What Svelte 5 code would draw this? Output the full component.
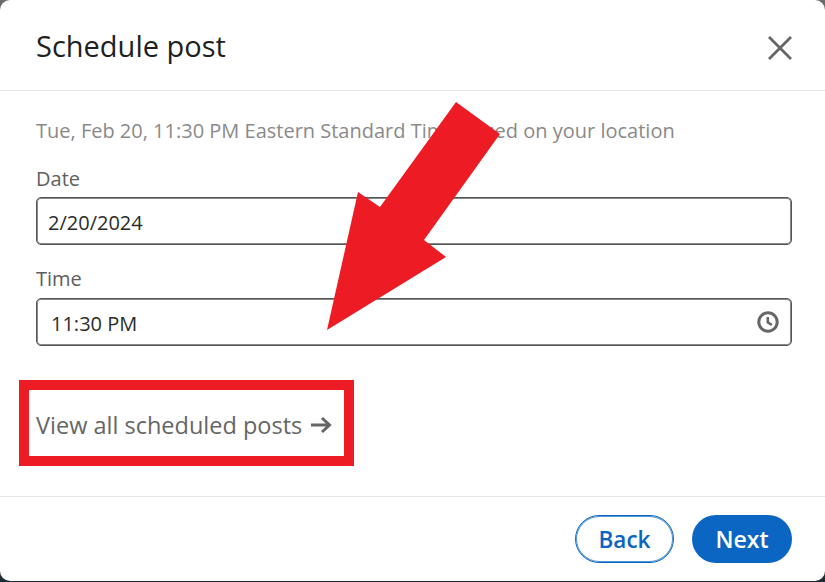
<script>
  const arrow = "456,102 500,134 424,240 446,257 327,330 358,192 380,207";
</script>

<div class="dialog">
  <header class="head">
    <h2>Schedule post</h2>
    <button class="close" aria-label="Close">
      <svg width="26" height="26" viewBox="0 0 26 26"><path d="M2 2 L24 24 M24 2 L2 24" stroke="#666" stroke-width="2.8" fill="none"/></svg>
    </button>
  </header>
  <section class="body">
    <p class="info">Tue, Feb 20, 11:30 PM Eastern Standard Time based on your location</p>
    <label class="field date">
      <span>Date</span>
      <div class="input">2/20/2024</div>
    </label>
    <label class="field time">
      <span>Time</span>
      <div class="input timeinput">
        <span class="val">11:30 PM</span>
        <svg width="22" height="22" viewBox="0 0 22 22"><circle cx="11" cy="11" r="9.2" stroke="#666" stroke-width="3" fill="none"/><path d="M10.8 6 V11.2 L14.8 14" stroke="#666" stroke-width="2.6" fill="none"/></svg>
      </div>
    </label>
    <a class="link" href="#top">View all scheduled posts
      <svg width="22" height="18" viewBox="0 0 22 18"><path d="M1 9 H19 M12 2 L19.5 9 L12 16" stroke="#666" stroke-width="3" fill="none"/></svg>
    </a>
  </section>
  <footer class="foot">
    <button class="btn back">Back</button>
    <button class="btn next">Next</button>
  </footer>
  <div class="redbox"></div>
  <svg class="arrow" width="825" height="582" viewBox="0 0 825 582"><polygon points={arrow} fill="#ed1c24"/></svg>
</div>

<style>
  :global(body) {
    margin: 0;
    height: 582px;
    background: linear-gradient(#6b6b6b, #555 60%, #1c2b33);
  }
  .dialog {
    position: relative;
    width: 825px;
    height: 581px;
    background: #fff;
    border-radius: 10px;
    font-family: "Open Sans", "Noto Sans", sans-serif;
    display: flex;
    flex-direction: column;
    overflow: hidden;
  }
  .head {
    height: 91px;
    box-sizing: border-box;
    border-bottom: 1px solid #e8e8e8;
    flex: none;
    display: flex;
    align-items: center;
    justify-content: space-between;
    padding: 1px 32px 0 36px;
  }
  h2 { margin: 0; font-size: 29px; font-weight: 500; color: #1f1f1f; }
  .close { border: 0; background: none; padding: 0; display: flex; margin-top: 4px; }
  .body { flex: 1; padding: 0 33px 0 36px; display: flex; flex-direction: column; }
  .info { margin: 27px 0 0; font-size: 20px; line-height: 26px; color: #8a8a8a; }
  .field { display: flex; flex-direction: column; color: #5e5e5e; font-size: 20px; line-height: 26px; }
  .date { margin-top: 22px; }
  .time { margin-top: 21px; }
  .input {
    margin-top: 5px;
    height: 48px;
    box-sizing: border-box;
    border: 1px solid #555;
    box-shadow: inset 0 0 0 1px rgba(85, 85, 85, 0.7);
    border-radius: 5px;
    padding: 3px 11px 0;
    display: flex;
    align-items: center;
    color: #2b2b2b;
    font-size: 20px;
  }
  .time .input { margin-top: 6px; }
  .timeinput { justify-content: space-between; padding: 3px 12px 0 14px; }
  .timeinput svg { margin-top: -3px; }
  .link {
    margin-top: 64px;
    display: flex;
    align-items: center;
    gap: 8px;
    color: #666;
    font-size: 23.5px;
    line-height: 30px;
    font-weight: 500;
    text-decoration: none;
  }
  .foot {
    height: 85px;
    box-sizing: border-box;
    flex: none;
    border-top: 1px solid #e8e8e8;
    display: flex;
    align-items: flex-start;
    justify-content: flex-end;
    gap: 18px;
    padding: 18px 33px 0 0;
  }
  .btn {
    height: 48px;
    border-radius: 24px;
    font-family: inherit;
    font-size: 23px;
    font-weight: 600;
    padding: 0;
  }
  .back { width: 99px; background: #fff; border: 1px solid #0a66c2; box-shadow: inset 0 0 0 1px rgba(10, 102, 194, 0.7); color: #0a66c2; font-size: 22.5px; }
  .next { width: 100px; background: #0a66c2; border: 0; color: #fff; }
  .redbox {
    position: absolute;
    left: 19px;
    top: 380px;
    width: 335px;
    height: 86px;
    box-sizing: border-box;
    border: 10px solid #ed1c24;
  }
  .arrow { position: absolute; left: 0; top: 0; pointer-events: none; }
</style>
